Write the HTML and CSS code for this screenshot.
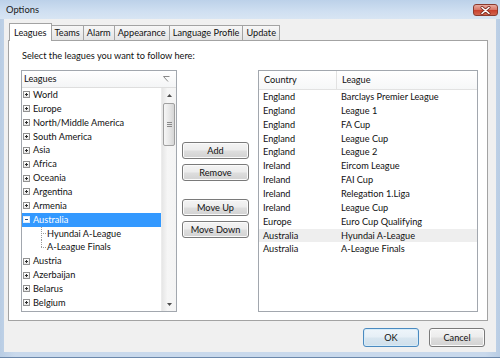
FILE: index.html
```html
<!DOCTYPE html>
<html>
<head>
<meta charset="utf-8">
<title>Options</title>
<link rel="stylesheet" href="styles.css">
</head>
<body>
<div class="window">
  <div class="titlebar">
    <span class="title">Options</span>
    <div class="close">
      <svg width="11" height="9" viewBox="0 0 11 9"><path d="M2 1.5 L9 7.5 M9 1.5 L2 7.5" stroke="#7a2a20" stroke-width="3" stroke-linecap="round"/><path d="M2 1.5 L9 7.5 M9 1.5 L2 7.5" stroke="#fff" stroke-width="1.6" stroke-linecap="round"/></svg>
    </div>
  </div>
  <div class="client">
    <div class="tabs">
      <div class="tab active">Leagues</div>
      <div class="tab">Teams</div>
      <div class="tab">Alarm</div>
      <div class="tab">Appearance</div>
      <div class="tab">Language Profile</div>
      <div class="tab">Update</div>
    </div>
    <div class="panel">
      <div class="intro">Select the leagues you want to follow here:</div>
      <div class="main">
        <div class="tree">
          <div class="tree-head">
            <span>Leagues</span>
            <svg class="sort" width="7" height="6" viewBox="0 0 7 6"><path d="M0.5 0.5 H6.5 M0.5 0.5 L5 5.5" stroke="#8a8a8a" stroke-width="1" fill="none"/></svg>
          </div>
          <div class="tree-body">
            <ul class="rows">
              <li class="node"><span class="exp"></span>World</li>
              <li class="node"><span class="exp"></span>Europe</li>
              <li class="node"><span class="exp"></span>North/Middle America</li>
              <li class="node"><span class="exp"></span>South America</li>
              <li class="node"><span class="exp"></span>Asia</li>
              <li class="node"><span class="exp"></span>Africa</li>
              <li class="node"><span class="exp"></span>Oceania</li>
              <li class="node"><span class="exp"></span>Argentina</li>
              <li class="node"><span class="exp"></span>Armenia</li>
              <li class="node selected"><span class="exp open"></span>Australia</li>
              <li class="child"><span class="branch"></span>Hyundai A-League</li>
              <li class="child last"><span class="branch"></span>A-League Finals</li>
              <li class="node"><span class="exp"></span>Austria</li>
              <li class="node"><span class="exp"></span>Azerbaijan</li>
              <li class="node"><span class="exp"></span>Belarus</li>
              <li class="node"><span class="exp"></span>Belgium</li>
            </ul>
            <div class="vscroll">
              <div class="sb-btn"><svg width="5" height="3" viewBox="0 0 5 3"><path d="M0 3 L2.5 0 L5 3Z" fill="#4d4d4d"/></svg></div>
              <div class="sb-thumb"><span class="grip"></span></div>
              <div class="sb-track"></div>
              <div class="sb-btn"><svg width="5" height="3" viewBox="0 0 5 3"><path d="M0 0 L2.5 3 L5 0Z" fill="#4d4d4d"/></svg></div>
            </div>
          </div>
        </div>
        <div class="actions">
          <button class="btn">Add</button>
          <button class="btn">Remove</button>
          <button class="btn group">Move Up</button>
          <button class="btn">Move Down</button>
        </div>
        <div class="list">
          <div class="list-head">
            <span class="hcell first">Country</span>
            <span class="hcell">League</span>
          </div>
          <div class="lrow"><span>England</span><span>Barclays Premier League</span></div>
          <div class="lrow"><span>England</span><span>League 1</span></div>
          <div class="lrow"><span>England</span><span>FA Cup</span></div>
          <div class="lrow"><span>England</span><span>League Cup</span></div>
          <div class="lrow"><span>England</span><span>League 2</span></div>
          <div class="lrow"><span>Ireland</span><span>Eircom League</span></div>
          <div class="lrow"><span>Ireland</span><span>FAI Cup</span></div>
          <div class="lrow"><span>Ireland</span><span>Relegation 1.Liga</span></div>
          <div class="lrow"><span>Ireland</span><span>League Cup</span></div>
          <div class="lrow"><span>Europe</span><span>Euro Cup Qualifying</span></div>
          <div class="lrow hover"><span>Australia</span><span>Hyundai A-League</span></div>
          <div class="lrow"><span>Australia</span><span>A-League Finals</span></div>
        </div>
      </div>
    </div>
    <div class="footer">
      <button class="btn footbtn default">OK</button>
      <button class="btn footbtn">Cancel</button>
    </div>
  </div>
</div>
</body>
</html>
```
FILE: styles.css
```css
html, body {
  margin: 0;
  padding: 0;
}
body {
  width: 500px;
  height: 358px;
  overflow: hidden;
  font-family: Lato, "Liberation Sans", sans-serif;
  font-size: 9.2px;
  color: #111;
}
.window {
  width: 500px;
  height: 358px;
  box-sizing: border-box;
  display: flex;
  flex-direction: column;
  background: linear-gradient(to right, #b9cde4, #c9d9ec 3%, #c9d9ec 97%, #b9cde4);
  border-bottom: 1px solid #6c88ab;
}
.titlebar {
  height: 19px;
  flex: none;
  display: flex;
  align-items: center;
  justify-content: space-between;
  padding-left: 6px;
  background: linear-gradient(#bcd1e9, #cfdff1 60%, #d8e5f3);
}
.title {
  font-size: 9.4px;
  color: #1b1b1b;
}
.close {
  width: 25px;
  height: 12px;
  box-sizing: border-box;
  margin-right: 2px;
  margin-top: 1px;
  border: 1px solid #8a3a2e;
  border-radius: 3px;
  background: linear-gradient(#e9aba0, #d9796a 45%, #c9412e 55%, #d1654f);
  display: flex;
  align-items: center;
  justify-content: center;
}
.client {
  flex: 1;
  margin: 0 4px 5px 4px;
  background: #f0f0f0;
  display: flex;
  flex-direction: column;
  padding: 4px 8px 0 4px;
}
.tabs {
  height: 17px;
  flex: none;
  display: flex;
  align-items: flex-end;
  padding-left: 1px;
}
.tab {
  height: 15px;
  box-sizing: border-box;
  border: 1px solid #a3a3a3;
  border-bottom: none;
  padding: 0 3px;
  margin-left: -1px;
  line-height: 14px;
  background: linear-gradient(#f7f7f7, #e4e4e4);
  color: #111;
  white-space: nowrap;
}
.tab:first-child {
  margin-left: 0;
}
.tab.active {
  height: 18px;
  line-height: 17px;
  margin-bottom: -1px;
  padding: 0 4px;
  background: #fff;
  position: relative;
  z-index: 1;
}
.panel {
  height: 281px;
  box-sizing: border-box;
  flex: none;
  border: 1px solid #a3a3a3;
  background: #fff;
  padding: 8px 9px 8px 12px;
  display: flex;
  flex-direction: column;
}
.intro {
  line-height: 14px;
  height: 14px;
  margin-bottom: 7px;
  padding-left: 1px;
}
.main {
  height: 242px;
  display: flex;
}
.tree {
  width: 156px;
  box-sizing: border-box;
  border: 1px solid #a2a7ae;
  display: flex;
  flex-direction: column;
  overflow: hidden;
}
.tree-head {
  height: 17px;
  box-sizing: border-box;
  border-bottom: 1px solid #dedede;
  background: linear-gradient(#ffffff, #f4f5f6);
  display: flex;
  align-items: center;
  justify-content: space-between;
  padding: 0 6px 1px 2px;
  flex: none;
}
.sort {
  align-self: flex-start;
  margin-top: 5px;
}
.tree-body {
  flex: 1;
  display: flex;
  min-height: 0;
}
.rows {
  list-style: none;
  margin: 0;
  padding: 0;
  flex: 1;
  overflow: hidden;
}
.rows li {
  height: 13.87px;
  line-height: 13.87px;
  display: flex;
  align-items: center;
  white-space: nowrap;
}
.node {
  padding-left: 1px;
}
.exp {
  width: 7px;
  height: 7px;
  box-sizing: border-box;
  border: 1px solid #929292;
  margin-right: 3px;
  flex: none;
  background:
    linear-gradient(#2f2f2f, #2f2f2f) center / 3px 1px no-repeat,
    linear-gradient(#2f2f2f, #2f2f2f) center / 1px 3px no-repeat,
    linear-gradient(#ffffff, #e6e6e6);
}
.exp.open {
  border-color: #e3eefb;
  background:
    linear-gradient(#2a4f80, #2a4f80) center / 3px 1px no-repeat,
    #ffffff;
}
.selected {
  background: #3399ff;
  color: #fff;
}
.child {
  padding-left: 19px;
}
.branch {
  width: 6px;
  height: 100%;
  flex: none;
  background:
    repeating-linear-gradient(to bottom, #9b9b9b 0 1px, transparent 1px 2px) 0 0 / 1px 100% no-repeat,
    repeating-linear-gradient(to right, #9b9b9b 0 1px, transparent 1px 2px) 0 50% / 100% 1px no-repeat;
}
.child.last .branch {
  background:
    repeating-linear-gradient(to bottom, #9b9b9b 0 1px, transparent 1px 2px) 0 0 / 1px 50% no-repeat,
    repeating-linear-gradient(to right, #9b9b9b 0 1px, transparent 1px 2px) 0 50% / 100% 1px no-repeat;
}
.vscroll {
  width: 15px;
  flex: none;
  display: flex;
  flex-direction: column;
  background: linear-gradient(to right, #e6e6e6, #f6f6f6 40%, #f4f4f4);
  border-left: 1px solid #ececec;
  box-sizing: border-box;
}
.sb-btn {
  height: 14px;
  flex: none;
  display: flex;
  align-items: center;
  justify-content: center;
}
.sb-thumb {
  height: 43px;
  flex: none;
  margin: 1px 1px 0 1px;
  box-sizing: border-box;
  border: 1px solid #a0a0a0;
  border-radius: 2px;
  background: linear-gradient(to right, #f6f6f6, #e8e8e8 50%, #d6d6d6);
  display: flex;
  align-items: center;
  justify-content: center;
}
.grip {
  width: 5px;
  height: 5px;
  background: repeating-linear-gradient(to bottom, #8a8a8a 0 1px, transparent 1px 2px);
}
.sb-track {
  flex: 1;
}
.actions {
  width: 67px;
  margin-left: 5px;
  padding-top: 72px;
  display: flex;
  flex-direction: column;
  gap: 5px;
}
.btn {
  font: inherit;
  color: #111;
  height: 17px;
  padding: 0;
  box-sizing: border-box;
  border: 1px solid #7a7a7a;
  border-radius: 3px;
  background: linear-gradient(#f4f4f4, #ececec 48%, #dedede 52%, #d2d2d2);
  box-shadow: inset 0 0 0 1px #fbfbfb;
  text-align: center;
  flex: none;
}
.btn.group {
  margin-top: 13px;
}
.list {
  width: 220px;
  margin-left: 9px;
  box-sizing: border-box;
  border: 1px solid #a2a7ae;
  overflow: hidden;
}
.list-head {
  height: 19px;
  box-sizing: border-box;
  border-bottom: 1px solid #e2e2e2;
  background: linear-gradient(#ffffff, #f6f7f8);
  display: flex;
  align-items: center;
}
.hcell {
  padding-left: 5px;
  line-height: 18px;
}
.hcell.first {
  width: 78px;
  box-sizing: border-box;
  border-right: 1px solid #e2e2e2;
}
.lrow {
  height: 13.87px;
  line-height: 13.87px;
  display: grid;
  grid-template-columns: 78px 1fr;
  white-space: nowrap;
}
.lrow span {
  padding-left: 4px;
}
.lrow.hover {
  background: #eeeeee;
}
.footer {
  display: flex;
  justify-content: flex-end;
  gap: 10px;
  margin-top: 7px;
  padding-right: 3px;
}
.footbtn {
  width: 56px;
  height: 19px;
}
.btn.default {
  border-color: #4a8ac0;
  background: linear-gradient(#eef5fa, #e6eff6 48%, #d8e6f0 52%, #cfdfeb);
  box-shadow: inset 0 0 0 1px #d6ebf8;
}
```
